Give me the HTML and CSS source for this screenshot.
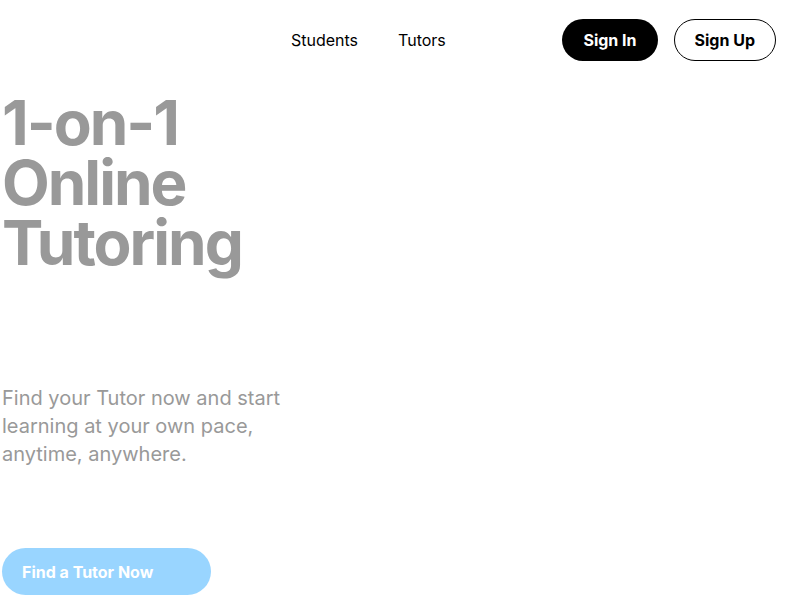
FILE: index.html
```html
<!DOCTYPE html>
<html>
<head>
<meta charset="utf-8">
<link rel="stylesheet" href="styles.css">
</head>
<body>
<header class="header">
  <nav class="nav">
    <a class="nav-link" href="#">Students</a>
    <a class="nav-link" href="#">Tutors</a>
  </nav>
  <div class="actions">
    <a class="btn btn-dark" href="#">Sign In</a>
    <a class="btn btn-outline" href="#">Sign Up</a>
  </div>
</header>
<main class="hero">
  <h1 class="title">1-on-1<br>Online<br>Tutoring</h1>
  <p class="lead">Find your Tutor now and start learning at your own pace, anytime, anywhere.</p>
  <a class="cta" href="#">Find a Tutor Now</a>
</main>
</body>
</html>
```
FILE: styles.css
```css
* { box-sizing: border-box; }
body {
  margin: 0;
  font-family: Inter, "Liberation Sans", sans-serif;
  background: #fff;
  color: #000;
}
a { text-decoration: none; color: inherit; }
.header {
  display: flex;
  align-items: center;
  height: 80px;
  padding: 0 24px 0 291px;
}
.nav {
  display: flex;
  gap: 40px;
}
.nav-link {
  font-size: 16px;
  color: #000;
}
.actions {
  margin-left: auto;
  display: flex;
  gap: 16px;
}
.btn {
  display: inline-flex;
  align-items: center;
  height: 42px;
  border-radius: 21px;
  font-weight: 700;
  font-size: 16px;
}
.btn-dark {
  background: #000;
  color: #fff;
  padding: 0 21px;
}
.btn-outline {
  background: #fff;
  color: #000;
  border: 1px solid #000;
  padding: 0 20px;
}
.hero {
  padding: 0 0 0 2px;
}
.title {
  margin: 13px 0 0;
  font-size: 62px;
  line-height: 60px;
  font-weight: 700;
  color: #999;
  letter-spacing: -2px;
}
.lead {
  margin: 111px 0 0;
  width: 300px;
  font-size: 20px;
  line-height: 28px;
  color: #999;
}
.cta {
  display: inline-flex;
  align-items: center;
  margin-top: 80px;
  height: 47px;
  width: 209px;
  padding: 0 20px;
  border-radius: 24px;
  background: #99d5ff;
  color: #fff;
  font-weight: 700;
  font-size: 16px;
}
```
